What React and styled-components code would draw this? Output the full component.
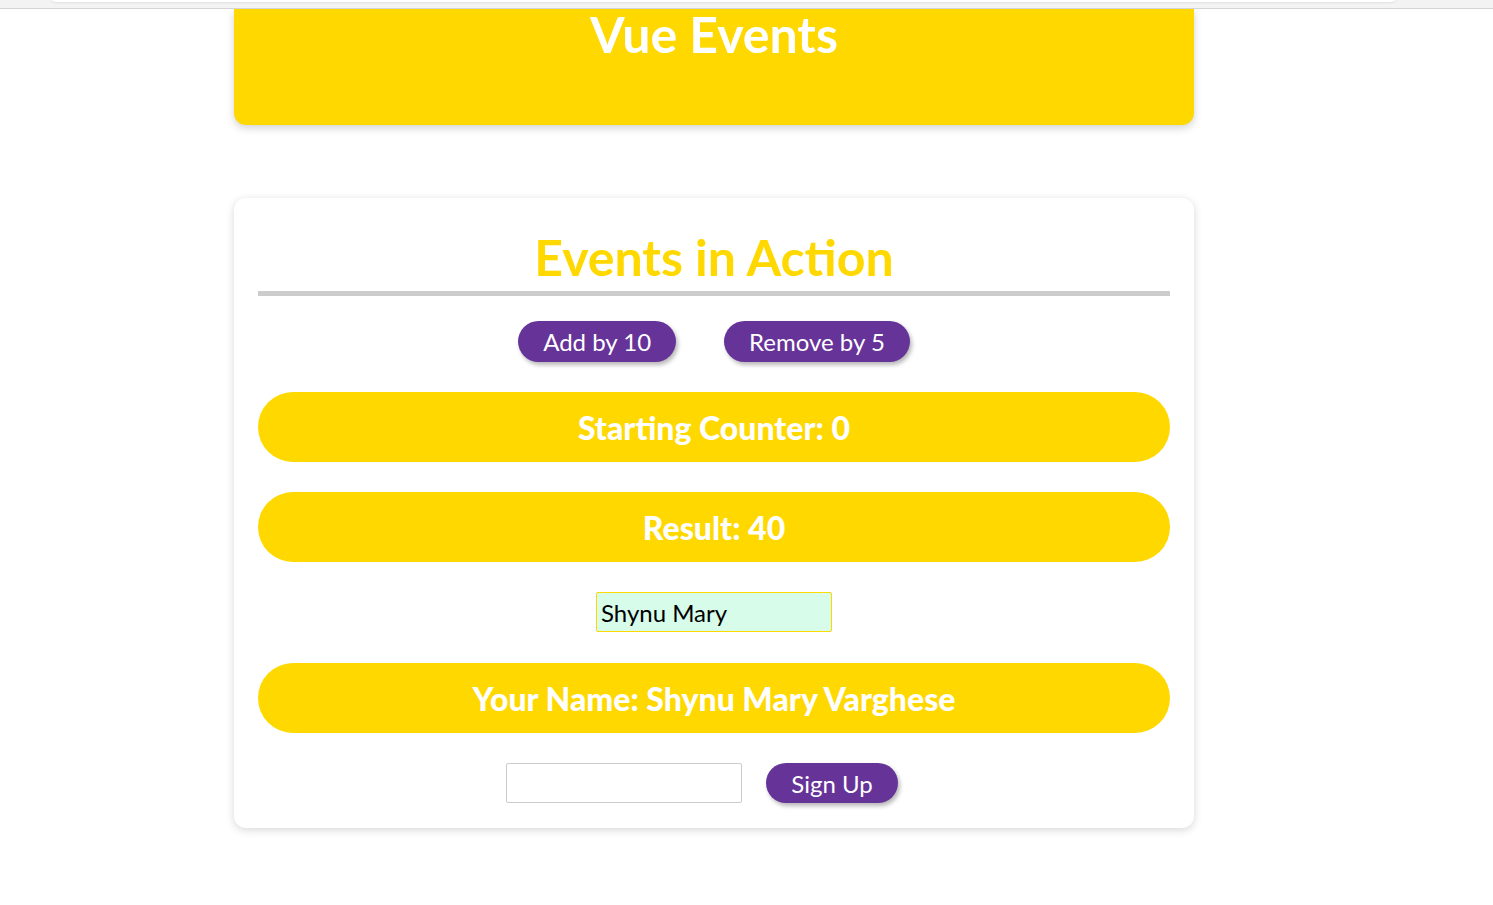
import React, { useState } from 'react';
import styled, { createGlobalStyle } from 'styled-components';

const GlobalStyle = createGlobalStyle`
  body {
    margin: 0;
    background: #ffffff;
    font-family: Lato, "Open Sans", sans-serif;
  }
`;

const BrowserStrip = styled.div`
  height: 8px;
  background: #f3f3f3;
  border-bottom: 1px solid #d4d4d4;
  position: relative;
  overflow: hidden;
`;

const StripPill = styled.div`
  position: absolute;
  left: 50px;
  right: 96px;
  top: -6px;
  height: 8px;
  background: #ffffff;
  border-radius: 0 0 6px 6px;
  box-shadow: 0 1px 2px rgba(0, 0, 0, 0.08);
`;

const Page = styled.div`
  width: 960px;
  margin-left: 234px;
  padding-bottom: 60px;
`;

const Header = styled.header`
  height: 116px;
  background: #ffd800;
  border-radius: 0 0 12px 12px;
  box-shadow: 0 3px 8px rgba(0, 0, 0, 0.18);
  display: flex;
  justify-content: center;
  box-sizing: border-box;
`;

const HeaderTitle = styled.h1`
  margin: 0;
  margin-top: -1px;
  color: #ffffff;
  font-size: 50px;
  font-weight: 700;
  line-height: 52px;
`;

const Card = styled.section`
  margin-top: 73px;
  background: #ffffff;
  border-radius: 12px;
  box-shadow: 0 2px 8px rgba(0, 0, 0, 0.16);
  padding: 24px 24px 25px;
  display: flex;
  flex-direction: column;
`;

const CardTitle = styled.h2`
  margin: 0;
  padding-top: 4px;
  color: #ffd800;
  font-size: 50px;
  font-weight: 700;
  line-height: 62px;
  text-align: center;
  border-bottom: 5px solid #cccccc;
  padding-bottom: 3px;
`;

const ButtonRow = styled.div`
  display: flex;
  justify-content: center;
  align-items: center;
  margin-top: ${p => p.$top || 30}px;
`;

const PillButton = styled.button`
  height: ${p => p.$h || 41}px;
  margin: 0 24px;
  padding: 0 25px;
  border: none;
  border-radius: 22px;
  background: #663399;
  color: #ffffff;
  font-family: Lato, "Open Sans", sans-serif;
  font-size: 24px;
  box-shadow: 2px 3px 4px rgba(0, 0, 0, 0.28);
  cursor: pointer;
`;

const Banner = styled.div`
  margin-top: ${p => p.$top || 30}px;
  height: 70px;
  border-radius: 35px;
  background: #ffd800;
  color: #ffffff;
  font-size: 32px;
  font-weight: 900;
  display: flex;
  align-items: center;
  justify-content: center;
`;

const TextField = styled.input`
  box-sizing: border-box;
  width: 236px;
  height: 40px;
  padding: 0 4px;
  border: 1px solid ${p => (p.$active ? '#ffd800' : '#cccccc')};
  border-radius: 2px;
  background: ${p => (p.$active ? '#d7fdea' : '#ffffff')};
  color: #000000;
  font-family: Lato, "Open Sans", sans-serif;
  font-size: 24px;
  outline: none;
`;

const FieldRow = styled.div`
  display: flex;
  justify-content: center;
  margin-top: 30px;
`;

export default function App() {
  const [counter, setCounter] = useState(40);
  const [name, setName] = useState('Shynu Mary');

  return (
    <>
      <GlobalStyle />
      <BrowserStrip>
        <StripPill />
      </BrowserStrip>
      <Page>
        <Header>
          <HeaderTitle>Vue Events</HeaderTitle>
        </Header>

        <Card>
          <CardTitle>Events in Action</CardTitle>
          <ButtonRow $top={25}>
            <PillButton onClick={() => setCounter(counter + 10)}>Add by 10</PillButton>
            <PillButton onClick={() => setCounter(counter - 5)}>Remove by 5</PillButton>
          </ButtonRow>
          <Banner>Starting Counter: 0</Banner>
          <Banner>Result: {counter}</Banner>
          <FieldRow>
            <TextField $active value={name} onChange={e => setName(e.target.value)} />
          </FieldRow>
          <Banner $top={31}>Your Name: Shynu Mary Varghese</Banner>
          <ButtonRow>
            <TextField />
            <PillButton $h={40}>Sign Up</PillButton>
          </ButtonRow>
        </Card>
      </Page>
    </>
  );
}
